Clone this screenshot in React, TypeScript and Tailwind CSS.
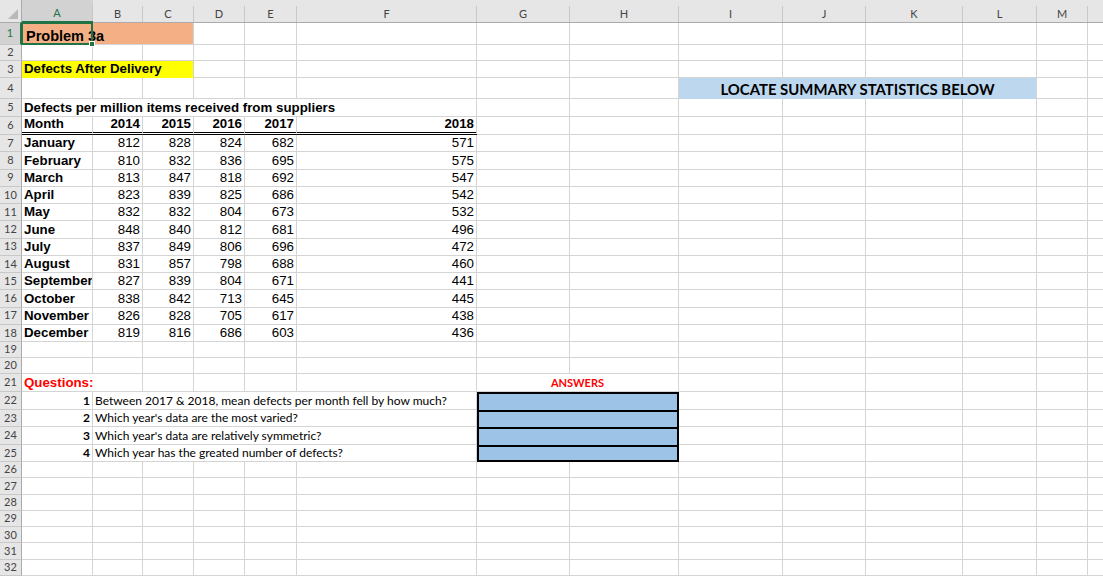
import React from "react";

type Cell = {
  span?: string;
  text?: React.ReactNode;
  cls?: string;
  overlay?: React.ReactNode;
};

const arial = "[font-family:'Liberation_Sans',Arial,sans-serif]";
const calibri = "[font-family:Lato,'Open_Sans',sans-serif]";

const cols = ["A", "B", "C", "D", "E", "F", "G", "H", "I", "J", "K", "L", "M", ""];

const data: [string, number, number, number, number, number][] = [
  ["January", 812, 828, 824, 682, 571],
  ["February", 810, 832, 836, 695, 575],
  ["March", 813, 847, 818, 692, 547],
  ["April", 823, 839, 825, 686, 542],
  ["May", 832, 832, 804, 673, 532],
  ["June", 848, 840, 812, 681, 496],
  ["July", 837, 849, 806, 696, 472],
  ["August", 831, 857, 798, 688, 460],
  ["September", 827, 839, 804, 671, 441],
  ["October", 838, 842, 713, 645, 445],
  ["November", 826, 828, 705, 617, 438],
  ["December", 819, 816, 686, 603, 436],
];

const questions = [
  "Between 2017 & 2018, mean defects per month fell by how much?",
  "Which year's data are the most varied?",
  "Which year's data are relatively symmetric?",
  "Which year has the greated number of defects?",
];

const blanks = (n: number): Cell[] => Array.from({ length: n }, () => ({}));

const bold13 = `${arial} text-[13.3px] font-bold`;
const num13 = `${arial} text-[13.3px] text-black justify-end pr-[2px]`;

// selection box over A1
const selection = (
  <div className="pointer-events-none absolute left-[-1px] top-[-1px] h-[23px] w-[72px] border-2 border-[#217346]">
    <div className="absolute bottom-[-4px] right-[-4px] h-[6px] w-[6px] border border-white bg-[#217346]" />
  </div>
);

const rows: Cell[][] = [
  // 1
  [
    {
      span: "col-span-3",
      text: "Problem 3a",
      cls: `${arial} text-[14.5px] font-bold text-black bg-[#f4b084] pl-[4px] relative overflow-visible`,
      overlay: selection,
    },
    ...blanks(11),
  ],
  // 2
  blanks(14),
  // 3
  [
    {
      span: "col-span-3",
      text: "Defects After Delivery",
      cls: `${bold13} text-black bg-[#ffff00] pl-[2px] border-b-[#ffff00]`,
    },
    ...blanks(11),
  ],
  // 4
  [
    ...blanks(8),
    {
      span: "col-span-4",
      text: "LOCATE SUMMARY STATISTICS BELOW",
      cls: `${calibri} text-[14.9px] font-bold text-black bg-[#bdd7ee] justify-center pb-[1px] border-b-[#bdd7ee]`,
    },
    ...blanks(2),
  ],
  // 5
  [
    {
      span: "col-span-6",
      text: "Defects per million items received from suppliers",
      cls: `${bold13} text-black pl-[2px]`,
    },
    ...blanks(8),
  ],
  // 6
  [
    { text: "Month", cls: `${bold13} text-black pl-[2px] dbl` },
    { text: "2014", cls: `${bold13} text-black justify-end pr-[2px] dbl` },
    { text: "2015", cls: `${bold13} text-black justify-end pr-[2px] dbl` },
    { text: "2016", cls: `${bold13} text-black justify-end pr-[2px] dbl` },
    { text: "2017", cls: `${bold13} text-black justify-end pr-[2px] dbl` },
    { text: "2018", cls: `${bold13} text-black justify-end pr-[2px] dbl` },
    ...blanks(8),
  ],
  // 7-18
  ...data.map(([m, a, b, c, d, e]) => [
    { text: m, cls: `${bold13} text-black pl-[2px]` },
    { text: a, cls: num13 },
    { text: b, cls: num13 },
    { text: c, cls: num13 },
    { text: d, cls: num13 },
    { text: e, cls: num13 },
    ...blanks(8),
  ]),
  // 19, 20
  blanks(14),
  blanks(14),
  // 21
  [
    { span: "col-span-2", text: "Questions:", cls: `${bold13} text-[#ff0000] pl-[2px]` },
    ...blanks(4),
    {
      span: "col-span-2",
      text: "ANSWERS",
      cls: `${calibri} text-[11px] font-bold text-[#ff0000] justify-center`,
    },
    ...blanks(6),
  ],
  // 22-25
  ...questions.map((q, i) => [
    { text: i + 1, cls: `${calibri} text-[12px] font-bold text-black justify-end pr-[2px]` },
    { span: "col-span-5", text: q, cls: `${calibri} text-[12px] text-black pl-[2px]` },
    {
      span: "col-span-2",
      cls: `answer bg-[#9dc3e6] ${i === 3 ? "last" : ""}`,
    },
    ...blanks(6),
  ]),
  // 26-32
  ...Array.from({ length: 7 }, () => blanks(14)),
];

function cellClass(c: Cell) {
  const base = "flex items-end whitespace-nowrap overflow-hidden leading-[14px]";
  let borders = "border-r border-b border-[#d4d4d4]";
  let extra = c.cls ?? "";
  if (extra.includes("dbl")) {
    borders = "border-r border-r-[#d4d4d4] border-b-[3px] border-double border-b-black";
    extra = extra.replace("dbl", "");
  }
  if (extra.includes("answer")) {
    borders = extra.includes("last")
      ? "border-2 border-black"
      : "border-2 border-b-0 border-black";
    extra = extra.replace("answer", "").replace("last", "");
  }
  return [base, borders, c.span ?? "", extra].join(" ");
}

export default function App() {
  return (
    <div className="h-[576px] w-[1103px] overflow-hidden bg-white">
      <div className="grid grid-cols-[22px_71px_50px_51px_51px_52px_180px_93px_109px_104px_83px_97px_74px_51px_60px] grid-rows-[23px_22px_16px_17px_21px_18px_18px_repeat(12,17.25px)_16px_16px_18px_repeat(4,17.5px)_repeat(7,16.3px)]">
        {/* corner */}
        <div className="flex items-end justify-end border-r border-b border-[#ababab] bg-[#e6e6e6] p-[3px]">
          <svg width="10" height="10" viewBox="0 0 10 10">
            <polygon points="10,0 10,10 0,10" fill="#b9b9b9" />
          </svg>
        </div>
        {/* column headers */}
        {cols.map((c, i) => (
          <div
            key={c + i}
            className={`flex items-end border-b ${
              i === 0 ? "border-[#217346] border-b-2 bg-[#d2d2d2] text-[#217346]" : "border-[#ababab] bg-[#e6e6e6] text-[#444]"
            } ${calibri} text-[11px]`}
          >
            <div className="flex h-[16px] w-full items-center justify-center border-r border-[#c8c8c8]">
              {c}
            </div>
          </div>
        ))}
        {rows.map((row, r) => (
          <React.Fragment key={r}>
            <div
              className={`flex items-center justify-center border-b border-r ${
                r === 0
                  ? "border-b-[#c8c8c8] border-r-2 border-r-[#217346] bg-[#d2d2d2] text-[#217346]"
                  : "border-b-[#c8c8c8] border-r-[#ababab] bg-[#e6e6e6] text-[#444]"
              } ${calibri} text-[11px]`}
            >
              {r + 1}
            </div>
            {row.map((c, i) => (
              <div key={i} className={cellClass(c)}>
                {c.overlay}
                {c.text !== undefined && <span className="pb-[1px]">{c.text}</span>}
              </div>
            ))}
          </React.Fragment>
        ))}
      </div>
    </div>
  );
}
